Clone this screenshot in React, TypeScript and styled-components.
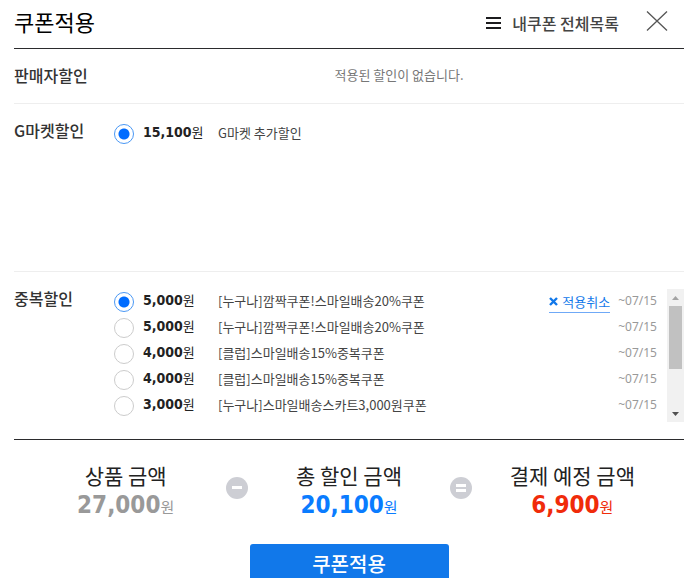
import React, { useState } from "react";
import styled, { createGlobalStyle } from "styled-components";

const hangul = `"Noto Sans CJK KR", sans-serif`;

const GlobalStyle = createGlobalStyle`
  *, *::before, *::after { box-sizing: border-box; }
  html { overflow: hidden; }
  body { margin: 0; background: #fff; color: #222; font-family: ${hangul}; }
  h1, h2, p, ul, dl, dt, dd, fieldset { margin: 0; padding: 0; border: 0; }
  button { font-family: inherit; padding: 0; border: 0; background: none; cursor: pointer; }
`;

const Layer = styled.main`
  padding: 0 9px 0 14px;
`;

const Header = styled.header`
  display: flex;
  align-items: center;
  height: 49px;
  padding: 0 16px 7px 0;
  border-bottom: 1px solid #2b2b2d;
`;

const Title = styled.h1`
  flex: 1;
  font-size: 22px;
  line-height: 32px;
  font-weight: 400;
  color: #000;
`;

const AllCoupons = styled.a`
  display: flex;
  align-items: center;
  gap: 11px;
  margin-right: 27px;
  padding-top: 4px;
  font-size: 16px;
  line-height: 24px;
  font-weight: 500;
  color: #444;
  text-decoration: none;
`;

const CloseButton = styled.button`
  display: flex;
`;

const Section = styled.section<{ $height: number; $last?: boolean }>`
  display: flex;
  min-height: ${(p) => p.$height}px;
  padding-top: 17px;
  border-bottom: 1px solid ${(p) => (p.$last ? "#2b2b2d" : "#eee")};
`;

const SectionTitle = styled.h2`
  flex: 0 0 100px;
  font-size: 16px;
  line-height: 18px;
  font-weight: 500;
  color: #333;
`;

const Empty = styled.p`
  flex: 1;
  text-align: center;
  font-size: 13px;
  line-height: 18px;
  color: #777;
`;

const CouponList = styled.ul`
  flex: 1;
  list-style: none;
`;

const CouponRow = styled.li`
  display: flex;
  align-items: center;
  height: 26px;
`;

const Choice = styled.label`
  display: flex;
  align-items: center;
  flex: 1;
  cursor: pointer;
`;

const Radio = styled.input`
  appearance: none;
  flex: none;
  width: 20px;
  height: 20px;
  margin: 0 9px 0 0;
  border: 1px solid #ccc;
  border-radius: 50%;
  background: #fff;
  &:checked {
    border-color: #4a98f5;
    background: radial-gradient(circle, #006cff 0 5px, #fff 6px);
  }
`;

const Price = styled.span`
  display: flex;
  align-items: baseline;
  flex: 0 0 75px;
  padding-bottom: 4px;
  font: 700 14px/22px "DejaVu Sans Condensed", "DejaVu Sans", sans-serif;
  color: #222;
`;

const Won = styled.span<{ $size: number }>`
  font-family: ${hangul};
  font-size: ${(p) => p.$size}px;
  font-weight: 400;
  line-height: 20px;
`;

const CouponName = styled.span`
  padding-bottom: 2px;
  font-size: 13px;
  line-height: 22px;
  color: #444;
`;

const Cancel = styled.button`
  display: flex;
  align-items: center;
  gap: 4px;
  height: 22px;
  border-bottom: 1px solid #6fa9f7;
  font-size: 13px;
  line-height: 20px;
  color: #1178ea;
`;

const Expiry = styled.span`
  margin: 0 10px 0 8px;
  padding-bottom: 2px;
  font: 12px/20px "Noto Sans", sans-serif;
  color: #999;
`;

const ScrollTrack = styled.div`
  display: flex;
  flex-direction: column;
  align-items: center;
  width: 17px;
  height: 133px;
  background: #f1f1f1;
`;

const ScrollArrow = styled.button`
  display: flex;
  align-items: center;
  justify-content: center;
  width: 17px;
  height: 17px;
`;

const ScrollThumb = styled.div`
  width: 13px;
  height: 63px;
  margin-bottom: auto;
  background: #c1c1c1;
`;

const Summary = styled.div`
  display: flex;
  align-items: flex-start;
  padding: 22px 0;
`;

const Total = styled.dl`
  flex: 1;
  text-align: center;
`;

const TotalLabel = styled.dt`
  font-size: 21px;
  line-height: 26px;
  color: #222;
`;

const TotalValue = styled.dd<{ $color: string }>`
  font: 700 24px/34px "DejaVu Sans Condensed", "DejaVu Sans", sans-serif;
  color: ${(p) => p.$color};
`;

const Operator = styled.svg`
  flex: none;
  margin: 15px -11px 0;
`;

const Apply = styled.button`
  display: block;
  width: 199px;
  height: 40px;
  margin: 0 auto;
  border-radius: 3px;
  background: #1178ea;
  color: #fff;
  font-size: 20px;
  line-height: 40px;
  font-weight: 500;
`;

const coupons = [
  { price: "5,000", name: "[누구나]깜짝쿠폰!스마일배송20%쿠폰" },
  { price: "5,000", name: "[누구나]깜짝쿠폰!스마일배송20%쿠폰" },
  { price: "4,000", name: "[클럽]스마일배송15%중복쿠폰" },
  { price: "4,000", name: "[클럽]스마일배송15%중복쿠폰" },
  { price: "3,000", name: "[누구나]스마일배송스카트3,000원쿠폰" },
];

function Amount({ value }: { value: string }) {
  return (
    <Price>
      {value}
      <Won $size={13}>원</Won>
    </Price>
  );
}

function Sum({ label, value, color }: { label: string; value: string; color: string }) {
  return (
    <Total>
      <TotalLabel>{label}</TotalLabel>
      <TotalValue $color={color}>
        {value}
        <Won $size={15}>원</Won>
      </TotalValue>
    </Total>
  );
}

export default function App() {
  const [picked, setPicked] = useState(0);
  return (
    <>
      <GlobalStyle />
      <Layer>
        <Header>
          <Title>쿠폰적용</Title>
          <AllCoupons href="#coupons">
            <svg width="15" height="12" viewBox="0 0 15 12" fill="#1c1c1e" aria-hidden="true">
              <path d="M0 0h15v2H0zM0 5h15v2H0zM0 10h15v2H0z" />
            </svg>
            내쿠폰 전체목록
          </AllCoupons>
          <CloseButton type="button" aria-label="닫기">
            <svg width="22" height="20" viewBox="0 0 22 20" stroke="#555" strokeWidth="1.3" aria-hidden="true">
              <path d="M1 0.5 21 19.5M21 0.5 1 19.5" />
            </svg>
          </CloseButton>
        </Header>

        <Section $height={55}>
          <SectionTitle>판매자할인</SectionTitle>
          <Empty>적용된 할인이 없습니다.</Empty>
        </Section>

        <Section $height={168}>
          <SectionTitle>G마켓할인</SectionTitle>
          <CouponList>
            <CouponRow>
              <Choice>
                <Radio type="radio" name="gmarket" defaultChecked />
                <Amount value="15,100" />
                <CouponName>G마켓 추가할인</CouponName>
              </Choice>
            </CouponRow>
          </CouponList>
        </Section>

        <Section $height={168} $last>
          <SectionTitle>중복할인</SectionTitle>
          <CouponList>
            {coupons.map((c, i) => (
              <CouponRow key={i}>
                <Choice>
                  <Radio type="radio" name="extra" checked={picked === i} onChange={() => setPicked(i)} />
                  <Amount value={c.price} />
                  <CouponName>{c.name}</CouponName>
                </Choice>
                {picked === i && (
                  <Cancel type="button" onClick={() => setPicked(-1)}>
                    <svg width="9" height="9" viewBox="0 0 9 9" stroke="#1178ea" strokeWidth="2.4" aria-hidden="true">
                      <path d="M1 1 8 8M8 1 1 8" />
                    </svg>
                    적용취소
                  </Cancel>
                )}
                <Expiry>~07/15</Expiry>
              </CouponRow>
            ))}
          </CouponList>
          <ScrollTrack>
            <ScrollArrow type="button" aria-label="위로">
              <svg width="7" height="4" viewBox="0 0 7 4" fill="#a3a3a3"><path d="M0 4 3.5 0 7 4z" /></svg>
            </ScrollArrow>
            <ScrollThumb />
            <ScrollArrow type="button" aria-label="아래로">
              <svg width="7" height="4" viewBox="0 0 7 4" fill="#505050"><path d="M0 0 3.5 4 7 0z" /></svg>
            </ScrollArrow>
          </ScrollTrack>
        </Section>

        <Summary>
          <Sum label="상품 금액" value="27,000" color="#999" />
          <Operator width="22" height="22" viewBox="0 0 22 22" role="img" aria-label="빼기">
            <circle cx="11" cy="11" r="11" fill="#cdced4" />
            <path d="M6 9h10v3H6z" fill="#fff" />
          </Operator>
          <Sum label="총 할인 금액" value="20,100" color="#0a7cff" />
          <Operator width="22" height="22" viewBox="0 0 22 22" role="img" aria-label="결과">
            <circle cx="11" cy="11" r="11" fill="#cdced4" />
            <path d="M6 7h10v3H6zM6 12h10v3H6z" fill="#fff" />
          </Operator>
          <Sum label="결제 예정 금액" value="6,900" color="#f02b0a" />
        </Summary>
        <Apply type="button">쿠폰적용</Apply>
      </Layer>
    </>
  );
}
